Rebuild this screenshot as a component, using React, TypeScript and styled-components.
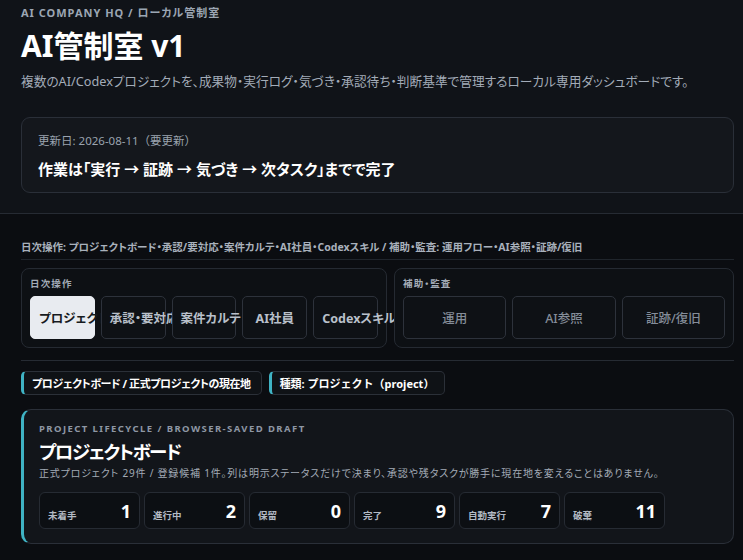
import styled, { createGlobalStyle } from "styled-components";

const GlobalStyle = createGlobalStyle`
    html, body {
        margin: 0;
        padding: 0;
        background: #0b0d11;
    }
    body {
        font-family: "Noto Sans", "Noto Sans CJK JP", sans-serif;
        font-feature-settings: "palt";
        color: #e9edf2;
    }
    button {
        font-feature-settings: "palt";
    }
`;

const dailyTabs = ["プロジェクト", "承認・要対応", "案件カルテ", "AI社員", "Codexスキル"];
const auditTabs = ["運用", "AI参照", "証跡/復旧"];
const stats = [
    { label: "未着手", value: 1 },
    { label: "進行中", value: 2 },
    { label: "保留", value: 0 },
    { label: "完了", value: 9 },
    { label: "自動実行", value: 7 },
    { label: "破棄", value: 11 },
];

function App() {
    return (
        <Page>
            <GlobalStyle />
            <Header>
                <Kicker>AI COMPANY HQ / ローカル管制室</Kicker>
                <Title>AI管制室 v1</Title>
                <Lead>
                    複数のAI/Codexプロジェクトを、成果物・実行ログ・気づき・承認待ち・判断基準で管理するローカル専用ダッシュボードです。
                </Lead>
                <UpdateCard>
                    <UpdateDate>更新日: 2026-08-11（要更新）</UpdateDate>
                    <UpdateRule>作業は「実行 → 証跡 → 気づき → 次タスク」までで完了</UpdateRule>
                </UpdateCard>
            </Header>

            <Main>
                <NavSummary>
                    日次操作: プロジェクトボード・承認/要対応・案件カルテ・AI社員・Codexスキル / 補助・監査: 運用フロー・AI参照・証跡/復旧
                </NavSummary>
                <Groups>
                    <Group>
                        <GroupLabel>日次操作</GroupLabel>
                        <TabRow $cols={5}>
                            {dailyTabs.map((t, i) => (
                                <Tab key={t} $active={i === 0}>
                                    {t}
                                </Tab>
                            ))}
                        </TabRow>
                    </Group>
                    <Group>
                        <GroupLabel>補助・監査</GroupLabel>
                        <TabRow $cols={3}>
                            {auditTabs.map((t) => (
                                <Tab key={t} $muted>
                                    {t}
                                </Tab>
                            ))}
                        </TabRow>
                    </Group>
                </Groups>

                <Divider />

                <ChipRow>
                    <Chip>プロジェクトボード / 正式プロジェクトの現在地</Chip>
                    <Chip $fullWidth>種類: プロジェクト（project）</Chip>
                </ChipRow>

                <Board>
                    <BoardKicker>PROJECT LIFECYCLE / BROWSER-SAVED DRAFT</BoardKicker>
                    <BoardTitle>プロジェクトボード</BoardTitle>
                    <BoardNote>
                        正式プロジェクト 29件 / 登録候補 1件。列は明示ステータスだけで決まり、承認や残タスクが勝手に現在地を変えることはありません。
                    </BoardNote>
                    <StatRow>
                        {stats.map((s) => (
                            <Stat key={s.label}>
                                <StatLabel>{s.label}</StatLabel>
                                <StatValue>{s.value}</StatValue>
                            </Stat>
                        ))}
                    </StatRow>
                </Board>
            </Main>
        </Page>
    );
}

export default App;

const Page = styled.div`
    min-height: 560px;
    background: #0b0d11;
`;

const Header = styled.header`
    padding: 6px 9px 20px 21px;
    background: #101318;
    border-bottom: 1px solid #262b33;
`;

const Kicker = styled.div`
    font-size: 11px;
    line-height: 14px;
    font-weight: 700;
    letter-spacing: 0.09em;
    color: #9ca6b3;
`;

const Title = styled.h1`
    margin: 8px 0 0;
    font-size: 30px;
    line-height: 36px;
    font-weight: 700;
    color: #ffffff;
`;

const Lead = styled.p`
    margin: 8px 0 0;
    font-size: 12.7px;
    line-height: 18px;
    color: #a3acb8;
    white-space: nowrap;
`;

const UpdateCard = styled.div`
    margin-top: 27px;
    padding: 15px 16px 13px;
    background: #14171c;
    border: 1px solid #2a2f38;
    border-radius: 9px;
`;

const UpdateDate = styled.div`
    font-size: 11.5px;
    line-height: 16px;
    font-feature-settings: normal;
    color: #9aa3ae;
`;

const UpdateRule = styled.div`
    margin-top: 10px;
    font-size: 15px;
    line-height: 20px;
    font-weight: 700;
    color: #ffffff;
`;

const Main = styled.main`
    padding: 26px 9px 17px 21px;
`;

const NavSummary = styled.div`
    padding-bottom: 5px;
    border-bottom: 1px solid #20252c;
    font-size: 10.5px;
    line-height: 14px;
    font-weight: 700;
    color: #a9b1bc;
    white-space: nowrap;
`;

const Groups = styled.div`
    display: grid;
    grid-template-columns: 366fr 340fr;
    gap: 7px;
    margin-top: 8px;
`;

const Group = styled.section`
    padding: 9px 8px 8px;
    border: 1px solid #252a32;
    border-radius: 8px;
    background: #0d1014;
`;

const GroupLabel = styled.div`
    font-size: 9.5px;
    line-height: 12px;
    font-weight: 700;
    letter-spacing: 0.12em;
    color: #a4acb7;
`;

const TabRow = styled.div<{ $cols: number }>`
    display: grid;
    grid-template-columns: repeat(${({ $cols }) => $cols}, 1fr);
    gap: 6px;
    margin-top: 6px;
`;

const Tab = styled.button<{ $active?: boolean; $muted?: boolean }>`
    height: 43px;
    min-width: 0;
    padding: 0 8px;
    border-radius: 5px;
    border: 1px solid ${({ $active }) => ($active ? "#e8ebf0" : "#2d323b")};
    background: ${({ $active }) => ($active ? "#e8ebf0" : "#0e1115")};
    color: ${({ $active, $muted }) =>
        $active ? "#161a20" : $muted ? "#858d99" : "#b9c0ca"};
    font-family: inherit;
    font-size: 12.5px;
    font-weight: ${({ $muted }) => ($muted ? 500 : 700)};
    text-align: center;
    white-space: nowrap;
`;

const Divider = styled.hr`
    margin: 12px 0 0;
    border: 0;
    border-top: 1px solid #262b33;
`;

const ChipRow = styled.div`
    display: flex;
    gap: 7px;
    margin-top: 10px;
`;

const Chip = styled.div<{ $fullWidth?: boolean }>`
    height: 24px;
    padding: 0 10px 0 8px;
    display: flex;
    align-items: center;
    box-sizing: border-box;
    border: 1px solid #2b3038;
    border-left: 3px solid #3fb3c4;
    border-radius: 5px;
    background: #0f1216;
    font-size: 11px;
    font-weight: 700;
    letter-spacing: ${({ $fullWidth }) => ($fullWidth ? "0" : "-0.04em")};
    font-feature-settings: ${({ $fullWidth }) => ($fullWidth ? "normal" : '"palt"')};
    color: #ffffff;
    white-space: nowrap;
`;

const Board = styled.section`
    margin-top: 14px;
    padding: 13px 16px 14px 15px;
    border: 1px solid #2a2f38;
    border-left: 3px solid #3fb3c4;
    border-radius: 10px;
    background: #12151a;
`;

const BoardKicker = styled.div`
    font-size: 9.5px;
    line-height: 12px;
    font-weight: 700;
    letter-spacing: 0.15em;
    color: #8e97a4;
`;

const BoardTitle = styled.h2`
    margin: 5px 0 0;
    font-size: 18.5px;
    line-height: 24px;
    font-weight: 700;
    letter-spacing: -0.08em;
    color: #ffffff;
`;

const BoardNote = styled.p`
    margin: 2px 0 0;
    font-size: 10px;
    line-height: 14px;
    letter-spacing: 0.08em;
    color: #a3abb6;
    white-space: nowrap;
`;

const StatRow = styled.div`
    display: grid;
    grid-template-columns: repeat(6, 101px);
    gap: 4px;
    margin-top: 12px;
`;

const Stat = styled.div`
    height: 37px;
    box-sizing: border-box;
    padding: 0 8px 0 8px;
    display: flex;
    align-items: center;
    justify-content: space-between;
    border: 1px solid #262b33;
    border-radius: 6px;
    background: #0c0f13;
`;

const StatLabel = styled.span`
    margin-top: 8px;
    font-size: 9.5px;
    font-weight: 700;
    color: #b3bac4;
`;

const StatValue = styled.span`
    font-size: 18px;
    font-weight: 700;
    color: #ffffff;
`;
